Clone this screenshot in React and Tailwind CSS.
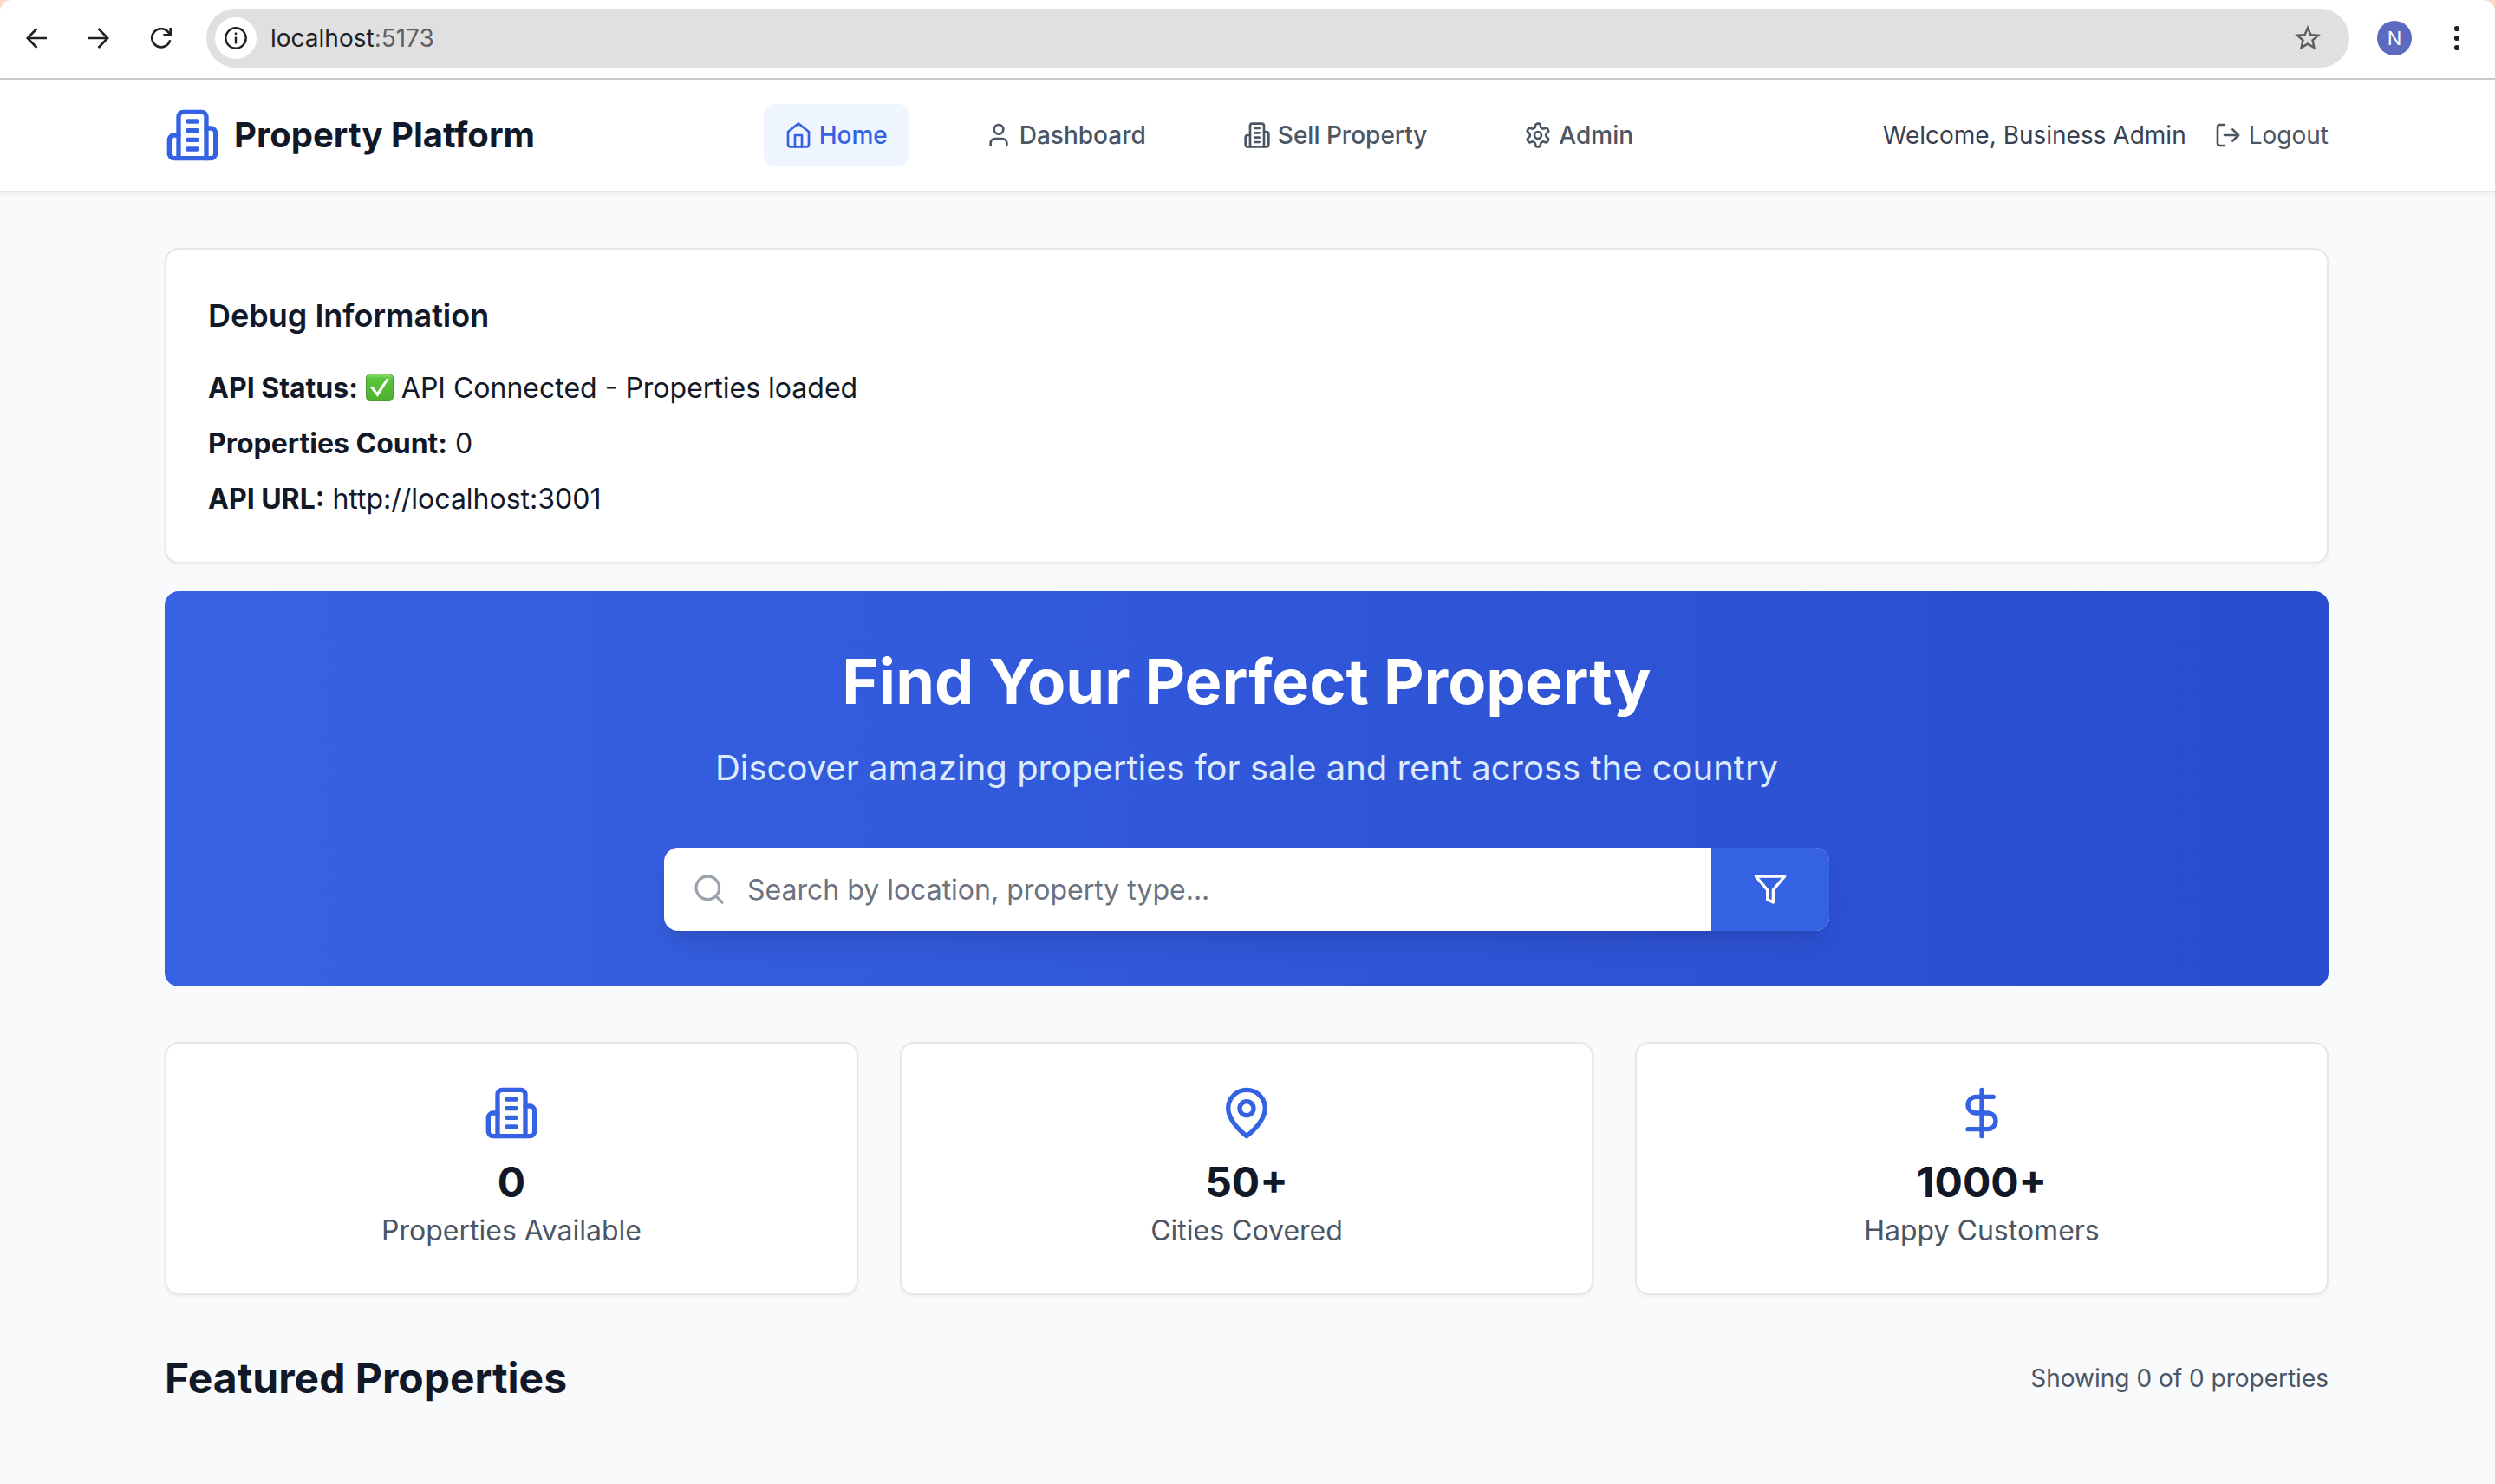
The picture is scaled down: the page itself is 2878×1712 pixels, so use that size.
const strokeProps = {
  viewBox: "0 0 24 24",
  fill: "none",
  stroke: "currentColor",
  strokeWidth: 2,
  strokeLinecap: "round",
  strokeLinejoin: "round",
  "aria-hidden": true,
};

function HomeIcon({ className }) {
  return (
    <svg {...strokeProps} className={className}>
      <path d="m3 9 9-7 9 7v11a2 2 0 0 1-2 2H5a2 2 0 0 1-2-2z" />
      <polyline points="9 22 9 12 15 12 15 22" />
    </svg>
  );
}

function UserIcon({ className }) {
  return (
    <svg {...strokeProps} className={className}>
      <path d="M19 21v-2a4 4 0 0 0-4-4H9a4 4 0 0 0-4 4v2" />
      <circle cx="12" cy="7" r="4" />
    </svg>
  );
}

function BuildingIcon({ className }) {
  return (
    <svg {...strokeProps} className={className}>
      <path d="M6 22V4a2 2 0 0 1 2-2h8a2 2 0 0 1 2 2v18Z" />
      <path d="M6 12H4a2 2 0 0 0-2 2v6a2 2 0 0 0 2 2h2" />
      <path d="M18 9h2a2 2 0 0 1 2 2v9a2 2 0 0 1-2 2h-2" />
      <path d="M10 6h4M10 10h4M10 14h4M10 18h4" />
    </svg>
  );
}

function SettingsIcon({ className }) {
  return (
    <svg {...strokeProps} className={className}>
      <path d="M12.22 2h-.44a2 2 0 0 0-2 2v.18a2 2 0 0 1-1 1.73l-.43.25a2 2 0 0 1-2 0l-.15-.08a2 2 0 0 0-2.73.73l-.22.38a2 2 0 0 0 .73 2.73l.15.1a2 2 0 0 1 1 1.72v.51a2 2 0 0 1-1 1.74l-.15.09a2 2 0 0 0-.73 2.73l.22.38a2 2 0 0 0 2.73.73l.15-.08a2 2 0 0 1 2 0l.43.25a2 2 0 0 1 1 1.73V20a2 2 0 0 0 2 2h.44a2 2 0 0 0 2-2v-.18a2 2 0 0 1 1-1.73l.43-.25a2 2 0 0 1 2 0l.15.08a2 2 0 0 0 2.73-.73l.22-.39a2 2 0 0 0-.73-2.73l-.15-.08a2 2 0 0 1-1-1.74v-.5a2 2 0 0 1 1-1.74l.15-.09a2 2 0 0 0 .73-2.73l-.22-.38a2 2 0 0 0-2.73-.73l-.15.08a2 2 0 0 1-2 0l-.43-.25a2 2 0 0 1-1-1.73V4a2 2 0 0 0-2-2z" />
      <circle cx="12" cy="12" r="3" />
    </svg>
  );
}

function LogOutIcon({ className }) {
  return (
    <svg {...strokeProps} className={className}>
      <path d="M9 21H5a2 2 0 0 1-2-2V5a2 2 0 0 1 2-2h4" />
      <polyline points="16 17 21 12 16 7" />
      <line x1="21" x2="9" y1="12" y2="12" />
    </svg>
  );
}

function SearchIcon({ className }) {
  return (
    <svg {...strokeProps} className={className}>
      <circle cx="11" cy="11" r="8" />
      <path d="m21 21-4.3-4.3" />
    </svg>
  );
}

function FilterIcon({ className }) {
  return (
    <svg {...strokeProps} className={className}>
      <polygon points="22 3 2 3 10 12.46 10 19 14 21 14 12.46 22 3" />
    </svg>
  );
}

function MapPinIcon({ className }) {
  return (
    <svg {...strokeProps} className={className}>
      <path d="M20 10c0 6-8 12-8 12s-8-6-8-12a8 8 0 0 1 16 0Z" />
      <circle cx="12" cy="10" r="3" />
    </svg>
  );
}

function DollarIcon({ className }) {
  return (
    <svg {...strokeProps} className={className}>
      <line x1="12" x2="12" y1="2" y2="22" />
      <path d="M17 5H9.5a3.5 3.5 0 0 0 0 7h5a3.5 3.5 0 0 1 0 7H6" />
    </svg>
  );
}

function CheckEmoji() {
  return (
    <svg viewBox="0 0 32 32" role="img" aria-label="OK" className="inline-block size-8 align-[-4px]">
      <defs>
        <linearGradient id="check-fill" x1="0" y1="0" x2="0" y2="1">
          <stop offset="0" stopColor="#8fdc7a" />
          <stop offset="0.18" stopColor="#5ac63c" />
          <stop offset="1" stopColor="#4fae30" />
        </linearGradient>
      </defs>
      <rect x="0.5" y="0.5" width="31" height="31" rx="4.5" fill="url(#check-fill)" stroke="#4c9a34" />
      <path d="M5.2 16.2 8 14.6 13 21.6 23.6 6H26.8L13.6 27Z" fill="#fff" />
    </svg>
  );
}

function BrowserBar() {
  return (
    <div className="bg-[#f9d9c8]">
      <div className="flex h-[92px] items-center rounded-t-[14px] border-b-2 border-[#cbcbcb] bg-white pb-0.5 pl-[22px] pr-6 text-[#1f2023]">
        <button type="button" aria-label="Back" className="flex size-10 items-center justify-center">
          <svg viewBox="0 0 24 24" className="size-6" fill="none" stroke="currentColor" strokeWidth="2.6" aria-hidden="true">
            <path d="M24 12H2M12.5 1 1.8 12l10.7 11" />
          </svg>
        </button>
        <button type="button" aria-label="Forward" className="ml-8 flex size-10 items-center justify-center">
          <svg viewBox="0 0 24 24" className="size-6" fill="none" stroke="currentColor" strokeWidth="2.6" aria-hidden="true">
            <path d="M0 12h22M11.5 1l10.7 11-10.7 11" />
          </svg>
        </button>
        <button type="button" aria-label="Reload" className="ml-8 flex size-10 items-center justify-center">
          <svg viewBox="0 0 24 24" className="size-6" fill="none" stroke="currentColor" strokeWidth="2.7" aria-hidden="true">
            <path d="M22.2 14.2A10.6 10.6 0 1 1 20.4 5.4L22.6 8.4" />
            <path d="M22.7 0v8.4H14.4" />
          </svg>
        </button>
        <div className="ml-8 flex h-[68px] flex-1 items-center rounded-full bg-[#e0e0e0] pl-2.5 pr-7">
          <button type="button" aria-label="Site information" className="flex size-12 items-center justify-center rounded-full bg-white">
            <svg viewBox="0 0 26 26" className="size-[26px]" fill="none" stroke="currentColor" strokeWidth="2.4" aria-hidden="true">
              <circle cx="13" cy="13" r="11.7" />
              <path d="M13 11.6v8M13 6.4v2.6" />
            </svg>
          </button>
          <p className="ml-4 flex-1 text-[28px] leading-10">
            localhost<span className="text-[#5f6063]">:5173</span>
          </p>
          <button type="button" aria-label="Bookmark this page" className="flex size-10 items-center justify-center text-[#5c5d5f]">
            <svg viewBox="2 2 20 20" className="size-[30px]" fill="currentColor" aria-hidden="true">
              <path d="m22 9.24-7.19-.62L12 2 9.19 8.63 2 9.24l5.46 4.73L5.82 21 12 17.27 18.18 21l-1.63-7.03zM12 15.4l-3.76 2.27 1-4.28-3.32-2.88 4.38-.38L12 6.1l1.71 4.04 4.38.38-3.32 2.88 1 4.28z" />
            </svg>
          </button>
        </div>
        <button type="button" aria-label="Profile" className="ml-8 flex size-10 items-center justify-center rounded-full bg-[#5c6ac0] text-[22px] leading-6 text-white">
          N
        </button>
        <button type="button" aria-label="More" className="ml-8 flex size-10 items-center justify-center">
          <svg viewBox="0 0 8 30" className="h-[30px] w-2" fill="currentColor" aria-hidden="true">
            <circle cx="4" cy="4" r="3.1" />
            <circle cx="4" cy="15" r="3.1" />
            <circle cx="4" cy="26" r="3.1" />
          </svg>
        </button>
      </div>
    </div>
  );
}

const navItems = [
  { label: "Home", Icon: HomeIcon, active: true },
  { label: "Dashboard", Icon: UserIcon },
  { label: "Sell Property", Icon: BuildingIcon },
  { label: "Admin", Icon: SettingsIcon },
];

function Header() {
  return (
    <header className="border-b-2 border-gray-200 bg-white pr-0.5 shadow-[0_2px_4px_0_rgba(0,0,0,0.05)]">
      <div className="mx-auto flex h-32 max-w-[2560px] items-center justify-between px-8">
        <a href="#home" className="flex items-center gap-4">
          <BuildingIcon className="size-16 text-[#3562e3]" />
          <span className="text-[40px] leading-14 font-bold text-[#111827]">Property Platform</span>
        </a>
        <nav className="flex items-center gap-16">
          {navItems.map(({ label, Icon, active }) => (
            <a
              key={label}
              href={"#" + label.toLowerCase().replace(" ", "-")}
              className={
                active
                  ? "flex items-center gap-2 rounded-xl bg-[#f0f6ff] px-6 py-4 text-[28px] leading-10 font-medium text-[#3562e3]"
                  : "flex items-center gap-2 rounded-xl px-6 py-4 text-[28px] leading-10 font-medium text-[#4b5563]"
              }
            >
              <Icon className="size-8" />
              <span>{label}</span>
            </a>
          ))}
        </nav>
        <div className="flex items-center gap-8 text-[28px] leading-10">
          <span className="text-[#374151]">Welcome, Business Admin</span>
          <button type="button" className="flex items-center gap-2 text-[#4b5563]">
            <LogOutIcon className="size-8" />
            <span>Logout</span>
          </button>
        </div>
      </div>
    </header>
  );
}

function Card({ children }) {
  return (
    <div className="rounded-2xl border-2 border-gray-200 bg-white p-12 shadow-[0_2px_4px_0_rgba(0,0,0,0.05)]">
      {children}
    </div>
  );
}

function DebugCard() {
  return (
    <Card>
      <h3 className="mb-8 text-[36px] leading-14 font-semibold">Debug Information</h3>
      <div className="flex flex-col gap-4 text-[32px] leading-12">
        <p>
          <strong className="font-bold">API Status:</strong> <CheckEmoji /> API Connected - Properties loaded
        </p>
        <p>
          <strong className="font-bold">Properties Count:</strong> 0
        </p>
        <p>
          <strong className="font-bold">API URL:</strong> http://localhost:3001
        </p>
      </div>
    </Card>
  );
}

function Hero() {
  return (
    <section className="mt-8 rounded-2xl bg-linear-to-r from-[#3762e3] to-[#2a4ccf] p-16 text-center text-white">
      <h1 className="mb-8 text-[72px] leading-20 font-bold">Find Your Perfect Property</h1>
      <p className="mb-16 text-[40px] leading-14 text-[#dbeafe]">
        Discover amazing properties for sale and rent across the country
      </p>
      <form className="mx-auto flex h-24 max-w-[1344px] overflow-hidden rounded-2xl bg-white shadow-[0_20px_30px_-6px_rgba(0,0,0,0.1),0_8px_12px_-8px_rgba(0,0,0,0.1)]">
        <label className="flex flex-1 items-center gap-6 pl-8">
          <SearchIcon className="size-10 text-[#9ca3af]" />
          <input
            type="text"
            aria-label="Search properties"
            placeholder="Search by location, property type..."
            className="h-full flex-1 text-[32px] text-[#111827] outline-none placeholder:text-[#6b7280]"
          />
        </label>
        <button type="button" aria-label="Filters" className="flex items-center bg-[#3562e3] px-12">
          <FilterIcon className="size-10" />
        </button>
      </form>
    </section>
  );
}

const stats = [
  { value: "0", label: "Properties Available", Icon: BuildingIcon },
  { value: "50+", label: "Cities Covered", Icon: MapPinIcon },
  { value: "1000+", label: "Happy Customers", Icon: DollarIcon },
];

function Stats() {
  return (
    <section className="mt-16 grid grid-cols-3 gap-12 text-center">
      {stats.map(({ value, label, Icon }) => (
        <Card key={label}>
          <Icon className="mx-auto mb-4 size-16 text-[#3562e3]" />
          <h3 className="text-[48px] leading-16 font-bold">{value}</h3>
          <p className="text-[32px] leading-12 text-[#4b5563]">{label}</p>
        </Card>
      ))}
    </section>
  );
}

export default function App() {
  return (
    <div className="min-h-screen bg-[#f9fafb] font-[Inter,sans-serif] text-[#111827]">
      <BrowserBar />
      <Header />
      <div className="pr-0.5">
        <main className="mx-auto max-w-[2560px] px-8 py-16">
          <DebugCard />
          <Hero />
          <Stats />
          <div className="mt-16 flex items-center justify-between">
            <h2 className="text-[48px] leading-16 font-bold">Featured Properties</h2>
            <p className="text-[28px] leading-10 text-[#4b5563]">Showing 0 of 0 properties</p>
          </div>
        </main>
      </div>
    </div>
  );
}
